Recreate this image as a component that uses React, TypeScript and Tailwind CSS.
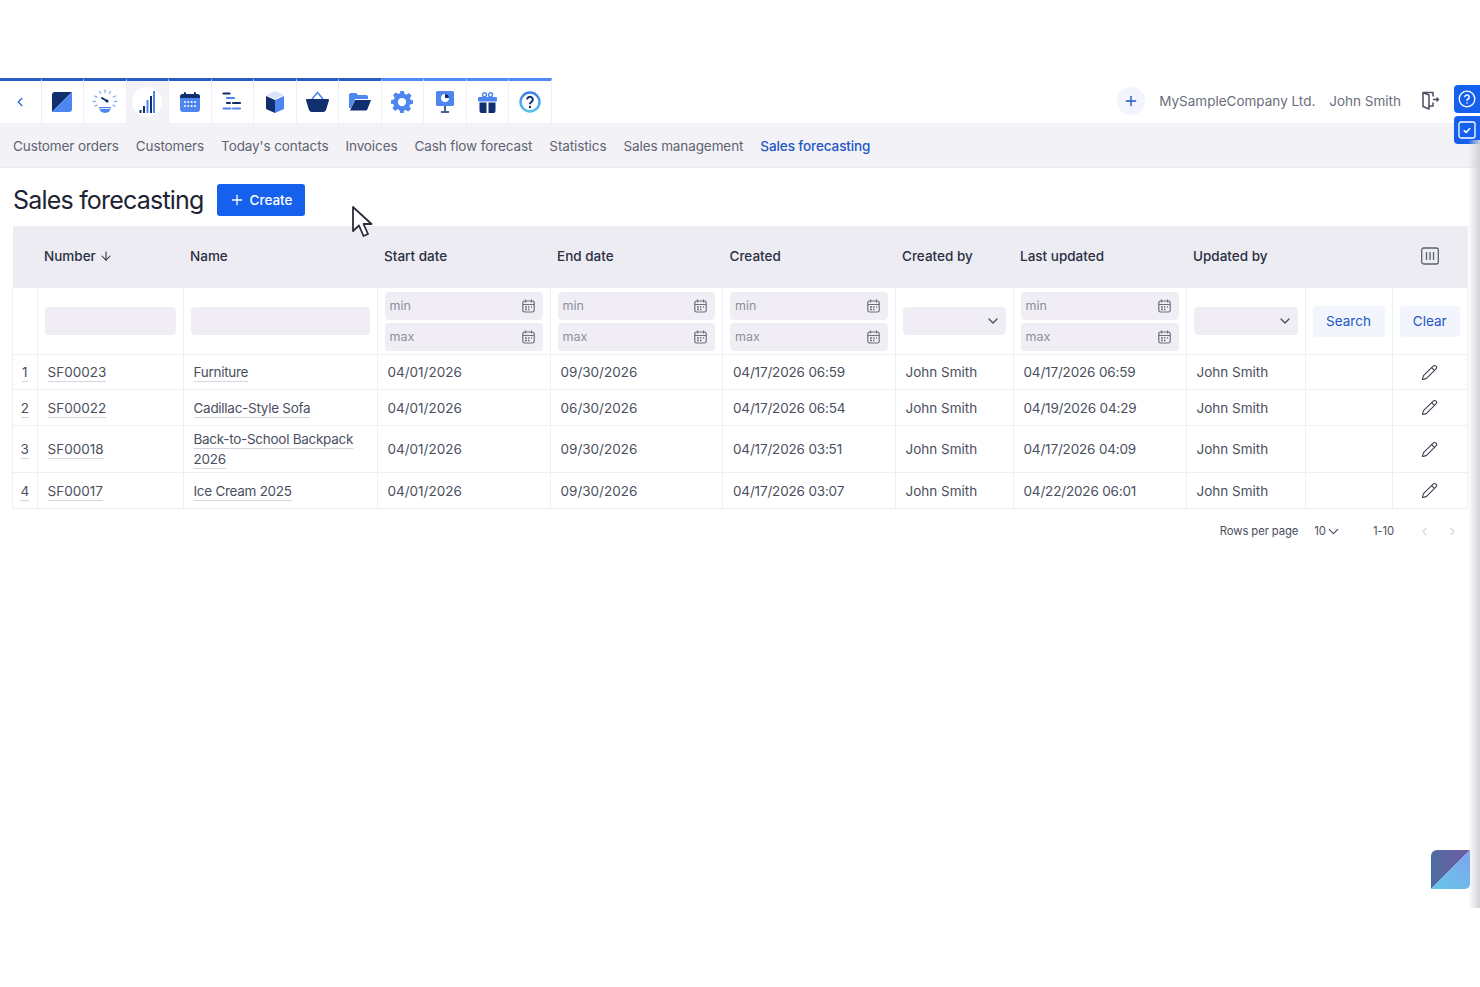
import React from "react";
import { ArrowDown, ChevronDown, ChevronLeft, ChevronRight, Pencil, Plus } from "lucide-react";

const DARK = "#0f2f6e";
const BLUE = "#4d86f0";

const tabs = [
  "Customer orders",
  "Customers",
  "Today's contacts",
  "Invoices",
  "Cash flow forecast",
  "Statistics",
  "Sales management",
  "Sales forecasting",
];

const rows = [
  { n: "1", num: "SF00023", name: "Furniture", start: "04/01/2026", end: "09/30/2026", created: "04/17/2026 06:59", updated: "04/17/2026 06:59", h: "h-[35px]" },
  { n: "2", num: "SF00022", name: "Cadillac-Style Sofa", start: "04/01/2026", end: "06/30/2026", created: "04/17/2026 06:54", updated: "04/19/2026 04:29", h: "h-[36px]" },
  { n: "3", num: "SF00018", name: "Back-to-School Backpack 2026", start: "04/01/2026", end: "09/30/2026", created: "04/17/2026 03:51", updated: "04/17/2026 04:09", h: "h-[47px]" },
  { n: "4", num: "SF00017", name: "Ice Cream 2025", start: "04/01/2026", end: "09/30/2026", created: "04/17/2026 03:07", updated: "04/22/2026 06:01", h: "h-[36px]" },
];

const LogoIcon = () => (
  <svg width="20" height="20" viewBox="0 0 20 20">
    <path d="M3 0H20L0 20V3a3 3 0 0 1 3-3z" fill={DARK} />
    <path d="M20 0V17a3 3 0 0 1-3 3H0z" fill={BLUE} />
  </svg>
);

const GaugeIcon = () => (
  <svg width="26" height="26" viewBox="0 0 26 26" fill="none" strokeLinecap="round">
    <g stroke="#8db2f5" strokeWidth="1.4">
      <path d="M13 1v2.5M7.5 2.5l1.2 2M18.5 2.5l-1.2 2M2.5 7l2.2 1.2M23.5 7l-2.2 1.2M1 12.5h2.5M25 12.5h-2.5M3 17l2-.8M23 17l-2-.8" />
    </g>
    <path d="M10 9l5 3" stroke={DARK} strokeWidth="2" />
    <circle cx="15" cy="12" r="1.6" fill={DARK} />
    <path d="M7 18h12a6 6 0 0 1-12 0z" fill={BLUE} />
    <path d="M8 19.5h10" stroke="#fff" strokeWidth="0.8" />
  </svg>
);

const BarsIcon = () => (
  <svg width="16" height="22" viewBox="0 0 16 22" fill="none" strokeWidth="2">
    <path d="M1.5 22v-3" stroke={DARK} />
    <path d="M5 22v-7" stroke={DARK} />
    <path d="M8.5 22V9" stroke={BLUE} />
    <path d="M12 22V5" stroke={DARK} />
    <path d="M15 22V0" stroke={BLUE} />
  </svg>
);

const CalendarIcon = () => (
  <svg width="20" height="20" viewBox="0 0 20 20">
    <rect x="0" y="2" width="20" height="18" rx="3" fill={BLUE} />
    <path d="M3 2h14a3 3 0 0 1 3 3v1H0V5a3 3 0 0 1 3-3z" fill={DARK} />
    <rect x="4" y="0" width="2" height="4" rx="1" fill={DARK} />
    <rect x="14" y="0" width="2" height="4" rx="1" fill={DARK} />
    <g fill="#fff">
      <circle cx="5" cy="10" r="1" /><circle cx="8.3" cy="10" r="1" /><circle cx="11.7" cy="10" r="1" /><circle cx="15" cy="10" r="1" />
      <circle cx="5" cy="14" r="1" /><circle cx="8.3" cy="14" r="1" /><circle cx="11.7" cy="14" r="1" /><circle cx="15" cy="14" r="1" />
    </g>
  </svg>
);

const GanttIcon = () => (
  <svg width="20" height="20" viewBox="0 0 20 20" fill="none" strokeWidth="2.2" strokeLinecap="round">
    <path d="M1.5 1.5h6" stroke={DARK} />
    <path d="M5 6h7" stroke={BLUE} />
    <path d="M5 11h3M11 11h7" stroke={DARK} />
    <path d="M1.5 16.500h7M11 16.500h7" stroke={BLUE} />
  </svg>
);

const BoxIcon = () => (
  <svg width="20" height="22" viewBox="0 0 20 22">
    <path d="M10 0l9 4-9 4-9-4z" fill="#d9e4fb" />
    <path d="M1 5l9 4v13l-9-4z" fill={DARK} />
    <path d="M19 5l-9 4v13l9-4z" fill={BLUE} />
  </svg>
);

const BasketIcon = () => (
  <svg width="23" height="22" viewBox="0 0 23 22" fill="none">
    <path d="M6 8l5.500-6.500L17 8" stroke={BLUE} strokeWidth="1.6" />
    <path d="M1 8h21a1 1 0 0 1 1 1.200L20 19a3 3 0 0 1-3 2H6a3 3 0 0 1-3-2L0 9.200A1 1 0 0 1 1 8z" fill={DARK} />
  </svg>
);

const FolderIcon = () => (
  <svg width="22" height="18" viewBox="0 0 22 18">
    <path d="M0 2a2 2 0 0 1 2-2h5l2 2h8a2 2 0 0 1 2 2v2H6L2 15H0z" fill={BLUE} />
    <path d="M6 7h16l-3.500 9a2 2 0 0 1-2 1.500H1z" fill={DARK} />
  </svg>
);

const GearIcon = () => (
  <svg width="22" height="22" viewBox="0 0 24 24" fill={BLUE}>
    <path fillRule="evenodd" d="M10 0h4l.8 3.200 1.900.8 2.900-1.700 2.800 2.800-1.700 2.900.8 1.900L24 10v4l-3.200.8-.8 1.900 1.700 2.900-2.800 2.800-2.900-1.700-1.900.8L14 24h-4l-.8-3.200-1.900-.8-2.900 1.700-2.800-2.800 1.700-2.900-.8-1.900L0 14v-4l3.200-.8.800-1.900-1.700-2.900 2.800-2.800 2.900 1.700 1.900-.8zM12 7.500a4.500 4.500 0 1 0 0 9 4.500 4.500 0 0 0 0-9z" />
  </svg>
);

const PresentationIcon = () => (
  <svg width="20" height="22" viewBox="0 0 20 22">
    <rect x="1" y="0" width="18" height="15" rx="1.500" fill={BLUE} />
    <circle cx="10" cy="7" r="4" fill="#fff" />
    <path d="M10 7V3a4 4 0 0 1 4 4z" fill={DARK} />
    <path d="M10 15v5" stroke={DARK} strokeWidth="1.500" />
    <path d="M6.500 21h7" stroke={DARK} strokeWidth="1.500" strokeLinecap="round" />
  </svg>
);

const GiftIcon = () => (
  <svg width="19" height="21" viewBox="0 0 19 21">
    <circle cx="6.500" cy="2.800" r="2" fill="none" stroke={BLUE} strokeWidth="1.400" />
    <circle cx="12.500" cy="2.800" r="2" fill="none" stroke={BLUE} strokeWidth="1.400" />
    <rect x="0" y="5" width="19" height="4.500" rx="1" fill={BLUE} />
    <path d="M1.500 10.500h7V21H3.500a2 2 0 0 1-2-2zM10.500 10.500h7V19a2 2 0 0 1-2 2h-5z" fill={DARK} />
  </svg>
);

const HelpIcon = () => (
  <svg width="22" height="22" viewBox="0 0 22 22" fill="none">
    <defs>
      <linearGradient id="ringGrad" x1="0" y1="0" x2="0" y2="1">
        <stop offset="0" stopColor="#3f7cec" />
        <stop offset="1" stopColor="#56c0ea" />
      </linearGradient>
    </defs>
    <circle cx="11" cy="11" r="9.500" stroke="url(#ringGrad)" strokeWidth="2.400" />
    <path d="M8.200 8.500a2.800 2.800 0 1 1 4.400 2.300c-1 .7-1.600 1.200-1.600 2.400" stroke={DARK} strokeWidth="2" />
    <circle cx="11" cy="16" r="1.200" fill={DARK} />
  </svg>
);

const navIcons = [
  LogoIcon, GaugeIcon, BarsIcon, CalendarIcon, GanttIcon, BoxIcon,
  BasketIcon, FolderIcon, GearIcon, PresentationIcon, GiftIcon, HelpIcon,
];

const DoorIcon = () => (
  <svg width="19" height="19" viewBox="0 0 19 19" fill="none" stroke="#4a4f60" strokeWidth="1.500" strokeLinejoin="round" strokeLinecap="round">
    <path d="M12 5V1.500H2v14l6 2.500V4L2 1.500" />
    <path d="M8 15h4v-3" />
    <path d="M12.500 8.500h5M16 7l1.500 1.500L16 10" />
  </svg>
);

const SmallCalendar = () => (
  <svg width="13" height="14" viewBox="0 0 13 14" fill="none" stroke="#6b6f7e" strokeWidth="1.200">
    <rect x="0.800" y="2" width="11.400" height="11" rx="1.800" />
    <path d="M3.500 0.500V3.500M9.500 0.500V3.500M0.800 5.500h11.400" />
    <path d="M3 8h2M6 8h1.500M9 8h1M3 10.500h2M6 10.500h1.500" strokeWidth="1.300" />
  </svg>
);

const ColumnsIcon = () => (
  <svg width="18" height="18" viewBox="0 0 18 18" fill="none" stroke="#5b6072" strokeWidth="1.300">
    <rect x="0.700" y="1" width="16.600" height="16" rx="2" />
    <path d="M5.500 5v8M9 5v8M12.500 5v8" />
  </svg>
);

const DateInput = ({ label }: { label: string }) => (
  <div className="flex h-[28px] items-center justify-between rounded-[4px] bg-[#f0eef4] pl-[5px] pr-[8px] text-[12.500px] text-[#8b8e9b]">
    <span>{label}</span>
    <SmallCalendar />
  </div>
);

const DateRange = () => (
  <td className="border border-[#eff0f5] px-[7px]">
    <div className="flex flex-col gap-[3px]">
      <DateInput label="min" />
      <DateInput label="max" />
    </div>
  </td>
);

const SelectFilter = () => (
  <td className="border border-[#eff0f5] px-[7px]">
    <div className="flex h-[28px] items-center justify-end rounded-[4px] bg-[#f0eef4] pr-[5px]">
      <ChevronDown size={16} color="#4a4f60" strokeWidth={2} />
    </div>
  </td>
);

const Cell = ({ children, className = "" }: { children?: React.ReactNode; className?: string }) => (
  <td className={`border border-[#eff0f5] px-[10px] ${className}`}>{children}</td>
);

const Link = ({ children }: { children: React.ReactNode }) => (
  <span className="border-b border-[#d5d7e0] pb-[1px]">{children}</span>
);

const headers = ["Start date", "End date", "Created", "Created by", "Last updated", "Updated by"];

export default function App() {
  return (
    <div className="relative h-[987px] overflow-hidden bg-white pt-[78px] font-['Inter',sans-serif] text-[13.500px] text-[#4a4f60]">
      {/* top icon bar */}
      <div className="flex h-[45px] items-center justify-between pr-[40px]">
        <div className="flex h-full w-[552px]">
          <div className="flex h-full w-[41.500px] items-center justify-center border-t-[3px] border-r border-t-[#2a5cc4] border-r-[#eff0f5]">
            <ChevronLeft size={14} color="#2f6ae0" strokeWidth={2.500} />
          </div>
          {navIcons.map((Icon, i) => (
            <div
              key={i}
              className={`flex h-full w-[42.500px] items-center justify-center border-t-[3px] border-r border-r-[#eff0f5] ${
                i < 8 ? "border-t-[#2a5cc4]" : "border-t-[#4d8af5]"
              } ${i === 2 ? "bg-[#f3f2f7]" : ""}`}
            >
              {i === 2 ? (
                <div className="flex h-[30px] w-[30px] items-center justify-center rounded-full bg-white">
                  <Icon />
                </div>
              ) : (
                <Icon />
              )}
            </div>
          ))}
        </div>
        <div className="flex items-center">
          <div className="flex h-[28px] w-[28px] items-center justify-center rounded-full bg-[#f3f5fd]">
            <Plus size={16} color="#1f55c0" strokeWidth={2} />
          </div>
          <span className="ml-[14px] pt-[2px] text-[#6a6e7d]">MySampleCompany Ltd.</span>
          <span className="ml-[14px] pt-[2px] text-[#6a6e7d]">John Smith</span>
          <span className="ml-[20px]">
            <DoorIcon />
          </span>
        </div>
      </div>

      {/* sub navigation */}
      <div className="flex h-[45px] items-center gap-[17px] border-b border-[#eceaf1] bg-[#f3f2f7] px-[13px] pt-[2px] tracking-[-0.100px] text-[#5f6372]">
        {tabs.map((t) => (
          <span key={t} className={t === "Sales forecasting" ? "font-medium text-[#2257c5]" : ""}>
            {t}
          </span>
        ))}
      </div>

      {/* title row */}
      <div className="flex h-[57.500px] items-center gap-[13px] px-[13px] pt-[7px]">
        <h1 className="text-[25px] leading-none font-normal tracking-[-0.800px] text-[#1d2333]">Sales forecasting</h1>
        <button className="flex h-[32px] w-[88px] items-center justify-center gap-[5px] rounded-[3px] bg-[#1660ee] font-medium text-white">
          <Plus size={16} strokeWidth={2} />
          Create
        </button>
      </div>

      {/* table */}
      <table className="ml-[12px] w-[1455px] table-fixed leading-[20px]">
        <colgroup>
          <col className="w-[24.500px]" />
          <col className="w-[146px]" />
          <col className="w-[194px]" />
          <col className="w-[173px]" />
          <col className="w-[172.500px]" />
          <col className="w-[172.500px]" />
          <col className="w-[118px]" />
          <col className="w-[173px]" />
          <col className="w-[119px]" />
          <col className="w-[87px]" />
          <col className="w-[75.500px]" />
        </colgroup>
        <thead>
          <tr className="h-[62px] bg-[#eeecf3] text-left font-medium text-[#2a3042]">
            <th />
            <th className="px-[7px] font-medium">
              <span className="flex items-center gap-[1px]">
                Number <ArrowDown size={14} strokeWidth={1.800} className="ml-[2px]" />
              </span>
            </th>
            <th className="px-[7px] font-medium">Name</th>
            {headers.map((h) => (
              <th key={h} className="px-[7px] font-medium">
                {h}
              </th>
            ))}
            <th />
            <th>
              <div className="flex justify-center">
                <ColumnsIcon />
              </div>
            </th>
          </tr>
          <tr className="h-[67px]">
            <td className="border border-[#eff0f5]" />
            <td className="border border-[#eff0f5] px-[7px]">
              <div className="h-[28px] rounded-[4px] bg-[#f0eef4]" />
            </td>
            <td className="border border-[#eff0f5] px-[7px]">
              <div className="h-[28px] rounded-[4px] bg-[#f0eef4]" />
            </td>
            <DateRange />
            <DateRange />
            <DateRange />
            <SelectFilter />
            <DateRange />
            <SelectFilter />
            <td className="border border-[#eff0f5] px-[7px]">
              <button className="h-[31px] w-full rounded-[4px] bg-[#f3f5fd] text-[#2257c5]">Search</button>
            </td>
            <td className="border border-[#eff0f5] px-[7px]">
              <button className="h-[31px] w-full rounded-[4px] bg-[#f3f5fd] text-[#2257c5]">Clear</button>
            </td>
          </tr>
        </thead>
        <tbody>
          {rows.map((r) => (
            <tr key={r.n} className={r.h}>
              <td className="border border-[#eff0f5] text-center">
                <Link>{r.n}</Link>
              </td>
              <Cell>
                <Link>{r.num}</Link>
              </Cell>
              <Cell className="tracking-[-0.280px]">
                <Link>{r.name}</Link>
              </Cell>
              <Cell>{r.start}</Cell>
              <Cell>{r.end}</Cell>
              <Cell className="tracking-[-0.170px]">{r.created}</Cell>
              <Cell>John Smith</Cell>
              <Cell className="tracking-[-0.170px]">{r.updated}</Cell>
              <Cell>John Smith</Cell>
              <Cell />
              <td className="border border-[#eff0f5]">
                <div className="flex justify-center">
                  <Pencil size={17} strokeWidth={1.500} color="#3a3f50" />
                </div>
              </td>
            </tr>
          ))}
        </tbody>
      </table>

      {/* pagination */}
      <div className="mt-[13px] flex h-[18px] items-center justify-end pr-[21px] text-[11.300px] tracking-[-0.100px]">
        <span>Rows per page</span>
        <span className="ml-[16px]">10</span>
        <ChevronDown size={17} className="ml-[-1px]" strokeWidth={1.800} />
        <span className="ml-[31px]">1-10</span>
        <ChevronLeft size={13} className="ml-[24px]" color="#d5d7de" />
        <ChevronRight size={13} className="ml-[15px]" color="#d5d7de" />
      </div>

      {/* overlays */}
      <div className="absolute top-[85px] right-0 flex h-[28px] w-[26px] items-center justify-center rounded-l-[4px] bg-[#1660ee]">
        <svg width="18" height="18" viewBox="0 0 18 18" fill="none" stroke="#fff" strokeWidth="1.300">
          <circle cx="9" cy="9" r="7.800" />
          <path d="M6.800 7.200a2.200 2.200 0 1 1 3.400 1.800c-.8.500-1.200.9-1.200 1.800" strokeWidth="1.500" />
          <circle cx="9" cy="13" r="0.800" fill="#fff" stroke="none" />
        </svg>
      </div>
      <div className="absolute top-[116px] right-0 flex h-[28px] w-[26px] items-center justify-center rounded-l-[4px] bg-[#1660ee]">
        <svg width="18" height="18" viewBox="0 0 18 18" fill="none" stroke="#fff" strokeWidth="1.300">
          <rect x="1" y="1" width="16" height="16" rx="2" />
          <path d="M5.800 9.300l2.300 2 4-4" strokeWidth="1.600" />
        </svg>
      </div>
      <div className="absolute top-[140px] right-0 h-[768px] w-[12px] bg-gradient-to-r from-transparent to-[#d2d2d6]" />
      <svg className="absolute top-[205px] left-[351px]" width="23" height="33" viewBox="0 0 23 33" fill="#fff" stroke="#2a2d38" strokeWidth="1.800" strokeLinejoin="round">
        <path d="M2 2v24l6-5.500 4.500 10.500 4.500-2-4.500-10 8 0z" />
      </svg>
      <svg className="absolute top-[850px] left-[1431px]" width="39" height="39" viewBox="0 0 39 39">
        <defs>
          <linearGradient id="logoA" x1="0" y1="0" x2="1" y2="0">
            <stop offset="0" stopColor="#4f6c9e" />
            <stop offset="1" stopColor="#6f5aa6" />
          </linearGradient>
          <linearGradient id="logoB" x1="1" y1="0" x2="0" y2="1">
            <stop offset="0" stopColor="#7fa3ee" />
            <stop offset="1" stopColor="#66c8ea" />
          </linearGradient>
        </defs>
        <path d="M6 0H39L0 39V6a6 6 0 0 1 6-6z" fill="url(#logoA)" />
        <path d="M39 0V34a5 5 0 0 1-5 5H0z" fill="url(#logoB)" />
      </svg>
    </div>
  );
}
